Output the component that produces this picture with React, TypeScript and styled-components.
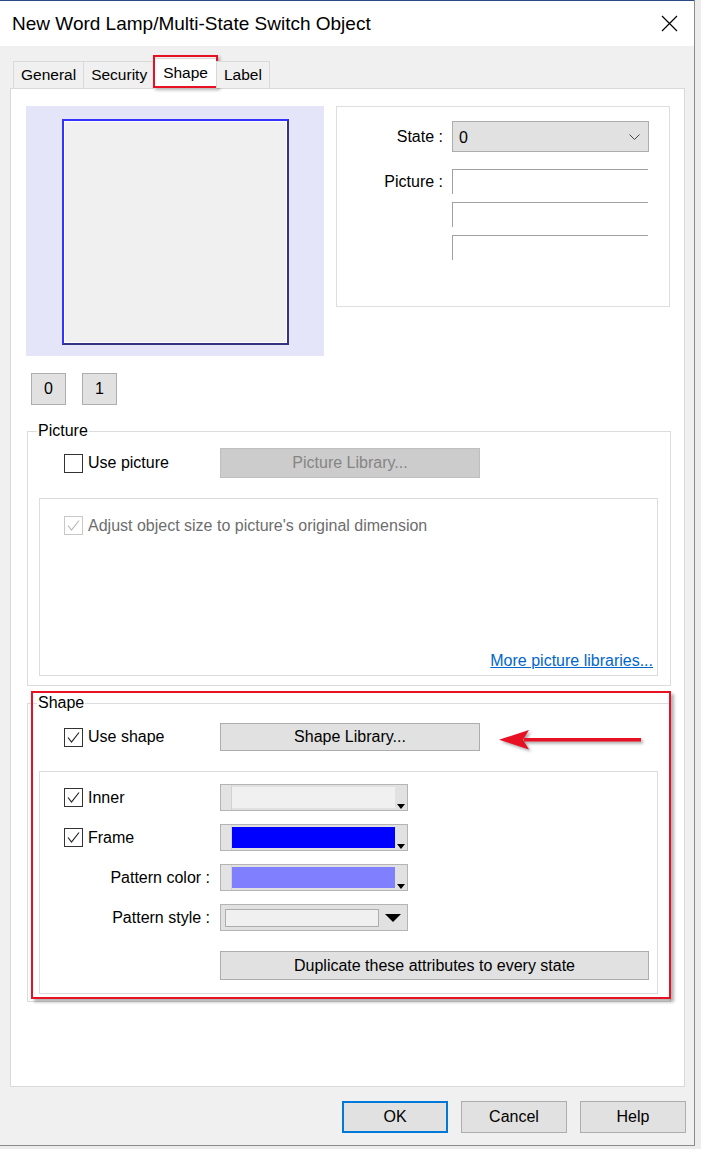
import React from 'react';
import styled, { createGlobalStyle } from 'styled-components';

const GlobalStyle = createGlobalStyle`
  *, *::before, *::after { box-sizing: border-box; }
  html, body { margin: 0; padding: 0; background: #ececec; }
  body {
    font-family: "Liberation Sans", Arial, sans-serif;
    font-size: 16px;
    color: #000;
  }
`;

// window frame
const Dialog = styled.div`
  width: 695px;
  height: 1146px;
  background: #f0f0f0;
  border-right: 1px solid #8c8c8c;
  border-bottom: 1px solid #8c8c8c;
  display: flex;
  flex-direction: column;
`;

const TitleBar = styled.div`
  height: 46px;
  flex: none;
  background: #fff;
  border-top: 1px solid #2a4a86;
  display: flex;
  align-items: center;
  padding-left: 12px;
`;

const Title = styled.div`
  font-size: 19px;
`;

const CloseButton = styled.div`
  margin-left: auto;
  margin-right: 2px;
  width: 46px;
  height: 44px;
  display: flex;
  align-items: center;
  justify-content: center;
`;

// tabs
const TabStrip = styled.div`
  display: flex;
  align-items: flex-end;
  height: 31px;
  margin-top: 12px;
  margin-bottom: -1px;
  padding-left: 13px;
  position: relative;
  z-index: 1;
`;

const Tab = styled.div<{ $active?: boolean }>`
  position: relative;
  height: ${(p) => (p.$active ? 31 : 27)}px;
  margin-bottom: ${(p) => (p.$active ? 0 : 1)}px;
  margin-left: ${(p) => (p.$active ? -2 : -1)}px;
  margin-right: ${(p) => (p.$active ? -1 : 0)}px;
  padding: ${(p) => (p.$active ? '0 9px 2px' : '0 7px')};
  background: ${(p) => (p.$active ? '#fff' : '#f0f0f0')};
  border: 1px solid #d9d9d9;
  border-bottom: none;
  display: flex;
  align-items: center;
  font-size: 15.5px;
  &:first-child { margin-left: 0; }
`;

const RedOutline = styled.div`
  position: absolute;
  top: -4px;
  left: -1px;
  right: -1px;
  bottom: 1px;
  border: 2px solid #e81123;
  box-shadow: 2px 2px 3px rgba(0, 0, 0, 0.3);
  pointer-events: none;
`;

const Panel = styled.div`
  margin-left: 10px;
  width: 675px;
  height: 999px;
  flex: none;
  background: #fff;
  border: 1px solid #d9d9d9;
  padding: 17px 14px 0 15px;
  display: flex;
  flex-direction: column;
`;

// top part
const TopRow = styled.div`
  display: flex;
  align-items: flex-start;
  gap: 12px;
`;

const Preview = styled.div`
  width: 298px;
  height: 250px;
  background: #e5e5f9;
  display: flex;
  justify-content: center;
  padding-top: 13px;
`;

const PreviewShape = styled.div`
  width: 227px;
  height: 226px;
  background: #f0f0f0;
  border: 2px solid;
  border-color: #3434ff #33337f #33337f #3434ff;
  box-shadow: inset 0 0 0 1px #fff;
`;

const StateBox = styled.div`
  width: 334px;
  height: 201px;
  border: 1px solid #dedede;
  padding-top: 14px;
  display: grid;
  grid-template-columns: 106px 197px;
  column-gap: 9px;
  row-gap: 17px;
  align-content: start;
`;

const FieldLabel = styled.div<{ $h: number }>`
  text-align: right;
  line-height: ${(p) => p.$h}px;
`;

const Select = styled.div`
  height: 31px;
  background: #e1e1e1;
  border: 1px solid #adadad;
  display: flex;
  align-items: center;
  justify-content: space-between;
  padding: 2px 8px 0 6px;
`;

const FieldStack = styled.div`
  display: flex;
  flex-direction: column;
  gap: 8px;
`;

const Field = styled.div`
  height: 25px;
  width: 196px;
  background: #fff;
  border-top: 1px solid #a0a0a0;
  border-left: 1px solid #a0a0a0;
`;

const StateButtons = styled.div`
  display: flex;
  gap: 16px;
  margin: 17px 0 0 5px;
`;

const Button = styled.button<{ $w: number; $h: number; $variant?: 'primary' | 'disabled' }>`
  width: ${(p) => p.$w}px;
  height: ${(p) => p.$h}px;
  flex: none;
  font-family: inherit;
  font-size: 16px;
  padding: 0;
  color: ${(p) => (p.$variant === 'disabled' ? '#858585' : '#000')};
  background: ${(p) => (p.$variant === 'disabled' ? '#cccccc' : '#e1e1e1')};
  border: ${(p) =>
    p.$variant === 'primary'
      ? '2px solid #0078d7'
      : p.$variant === 'disabled'
        ? '1px solid #bfbfbf'
        : '1px solid #adadad'};
`;

// group boxes
const Group = styled.fieldset<{ $top: number; $bottom: number }>`
  position: relative;
  margin: ${(p) => p.$top}px 0 0 1px;
  width: 644px;
  min-width: 0;
  padding: 0 12px ${(p) => p.$bottom}px 11px;
  border: 1px solid #dcdcdc;
`;

const Legend = styled.legend`
  padding: 0 1px;
  margin-left: -2px;
  line-height: 18px;
  font-size: 16px;
`;

const GroupRow = styled.div<{ $top: number }>`
  position: relative;
  display: flex;
  align-items: center;
  margin-top: ${(p) => p.$top}px;
  padding-left: 25px;
`;

const CheckField = styled.label<{ $w?: number; $disabled?: boolean }>`
  width: ${(p) => (p.$w ? `${p.$w}px` : 'auto')};
  display: flex;
  align-items: center;
  gap: 5px;
  color: ${(p) => (p.$disabled ? '#6d6d6d' : '#000')};
`;

const Box = styled.span<{ $disabled?: boolean }>`
  width: 19px;
  height: 19px;
  flex: none;
  background: #fff;
  border: 1px solid ${(p) => (p.$disabled ? '#c8c8c8' : '#333')};
  display: flex;
  align-items: center;
  justify-content: center;
`;

const InnerBox = styled.div<{ $h: number }>`
  margin-top: 20px;
  width: 619px;
  height: ${(p) => p.$h}px;
  border: 1px solid #dcdcdc;
`;

const PictureOptions = styled(InnerBox)`
  display: flex;
  flex-direction: column;
  padding: 17px 4px 5px 24px;
`;

const Link = styled.a`
  margin-top: auto;
  align-self: flex-end;
  line-height: 18px;
  color: #0066cc;
  text-decoration: underline;
`;

const ShapeOptions = styled(InnerBox)`
  display: grid;
  grid-template-columns: 156px 1fr;
  grid-auto-rows: 27px;
  row-gap: 13px;
  align-items: center;
  padding: 12px 0 0 24px;
`;

const RightLabel = styled.div`
  text-align: right;
  padding-right: 10px;
`;

const Combo = styled.div`
  width: 188px;
  height: 27px;
  background: #e1e1e1;
  border: 1px solid #b4b4b4;
  display: flex;
`;

const ComboStrip = styled.div`
  width: 11px;
  border-right: 1px solid #d2d2d2;
  background: #e3e3e3;
`;

const Swatch = styled.div<{ $color: string }>`
  flex: 1;
  margin: 2px 0;
  background: ${(p) => p.$color};
`;

const ComboDrop = styled.div`
  width: 12px;
  position: relative;
  &::after {
    content: '';
    position: absolute;
    right: 2px;
    bottom: 1px;
    border-left: 4px solid transparent;
    border-right: 4px solid transparent;
    border-top: 5px solid #000;
  }
`;

const PatternWell = styled.div`
  width: 154px;
  height: 18px;
  margin: 4px 0 0 4px;
  background: #f0f0f0;
  border: 1px solid #adadad;
`;

const PatternDrop = styled.div`
  flex: 1;
  display: flex;
  align-items: center;
  justify-content: center;
  &::after {
    content: '';
    border-left: 8px solid transparent;
    border-right: 8px solid transparent;
    border-top: 8px solid #000;
  }
`;

const DuplicateCell = styled.div`
  grid-column: 2;
  align-self: start;
  margin-top: 7px;
`;

const Highlight = styled.div`
  position: absolute;
  top: -21px;
  left: 3px;
  width: 640px;
  bottom: 2px;
  border: 2px solid #e81123;
  box-shadow: 3px 3px 3px rgba(0, 0, 0, 0.3);
  pointer-events: none;
`;

const Arrow = styled.svg`
  position: absolute;
  left: 459px;
  top: 5px;
  filter: drop-shadow(2px 2px 1.5px rgba(0, 0, 0, 0.35));
`;

const Footer = styled.div`
  display: flex;
  justify-content: flex-end;
  gap: 13px;
  padding: 14px 8px 0 0;
`;

const Check = ({ disabled }: { disabled?: boolean }) => (
  <svg width="15" height="15" viewBox="0 0 15 15">
    <polyline
      points="2,7.5 5.5,12 13,2.5"
      fill="none"
      stroke={disabled ? '#b8b8b8' : '#222'}
      strokeWidth="1.2"
    />
  </svg>
);

const Checkbox = ({
  label,
  checked,
  disabled,
  width,
}: {
  label: string;
  checked?: boolean;
  disabled?: boolean;
  width?: number;
}) => (
  <CheckField $w={width} $disabled={disabled}>
    <Box $disabled={disabled}>{checked && <Check disabled={disabled} />}</Box>
    {label}
  </CheckField>
);

const ColorCombo = ({ color }: { color: string }) => (
  <Combo>
    <ComboStrip />
    <Swatch $color={color} />
    <ComboDrop />
  </Combo>
);

export default function App() {
  return (
    <>
      <GlobalStyle />
      <Dialog>
        <TitleBar>
          <Title>New Word Lamp/Multi-State Switch Object</Title>
          <CloseButton>
            <svg width="17" height="17" viewBox="0 0 17 17">
              <path d="M1 1 L16 16 M16 1 L1 16" stroke="#000" strokeWidth="1.2" />
            </svg>
          </CloseButton>
        </TitleBar>

        <TabStrip>
          <Tab>General</Tab>
          <Tab>Security</Tab>
          <Tab $active>
            Shape
            <RedOutline />
          </Tab>
          <Tab>Label</Tab>
        </TabStrip>

        <Panel>
          <TopRow>
            <Preview>
              <PreviewShape />
            </Preview>
            <StateBox>
              <FieldLabel $h={31}>State :</FieldLabel>
              <Select>
                <span>0</span>
                <svg width="11" height="7" viewBox="0 0 11 7">
                  <polyline points="0.5,0.5 5.5,5.5 10.5,0.5" fill="none" stroke="#444" strokeWidth="1" />
                </svg>
              </Select>
              <FieldLabel $h={25}>Picture :</FieldLabel>
              <FieldStack>
                <Field />
                <Field />
                <Field />
              </FieldStack>
            </StateBox>
          </TopRow>

          <StateButtons>
            <Button $w={35} $h={32}>0</Button>
            <Button $w={35} $h={32}>1</Button>
          </StateButtons>

          <Group $top={17} $bottom={9}>
            <Legend>Picture</Legend>
            <GroupRow $top={8}>
              <Checkbox label="Use picture" width={156} />
              <Button $w={260} $h={30} $variant="disabled">Picture Library...</Button>
            </GroupRow>
            <PictureOptions $h={178}>
              <Checkbox label="Adjust object size to picture's original dimension" checked disabled />
              <Link>More picture libraries...</Link>
            </PictureOptions>
          </Group>

          <Group $top={8} $bottom={7}>
            <Legend>Shape</Legend>
            <GroupRow $top={11}>
              <Checkbox label="Use shape" checked width={156} />
              <Button $w={260} $h={28}>Shape Library...</Button>
              <Arrow width="146" height="24" viewBox="0 0 146 24">
                <rect x="26" y="10" width="117" height="3.5" fill="#e81123" />
                <path d="M1 11.7 L31 2 L25 11.7 L31 21.5 Z" fill="#e81123" />
              </Arrow>
            </GroupRow>
            <ShapeOptions $h={223}>
              <Checkbox label="Inner" checked />
              <ColorCombo color="#f0f0f0" />
              <Checkbox label="Frame" checked />
              <ColorCombo color="#0000ff" />
              <RightLabel>Pattern color :</RightLabel>
              <ColorCombo color="#8080ff" />
              <RightLabel>Pattern style :</RightLabel>
              <Combo>
                <PatternWell />
                <PatternDrop />
              </Combo>
              <DuplicateCell>
                <Button $w={429} $h={29}>Duplicate these attributes to every state</Button>
              </DuplicateCell>
            </ShapeOptions>
            <Highlight />
          </Group>
        </Panel>

        <Footer>
          <Button $w={106} $h={32} $variant="primary">OK</Button>
          <Button $w={106} $h={32}>Cancel</Button>
          <Button $w={106} $h={32}>Help</Button>
        </Footer>
      </Dialog>
    </>
  );
}
